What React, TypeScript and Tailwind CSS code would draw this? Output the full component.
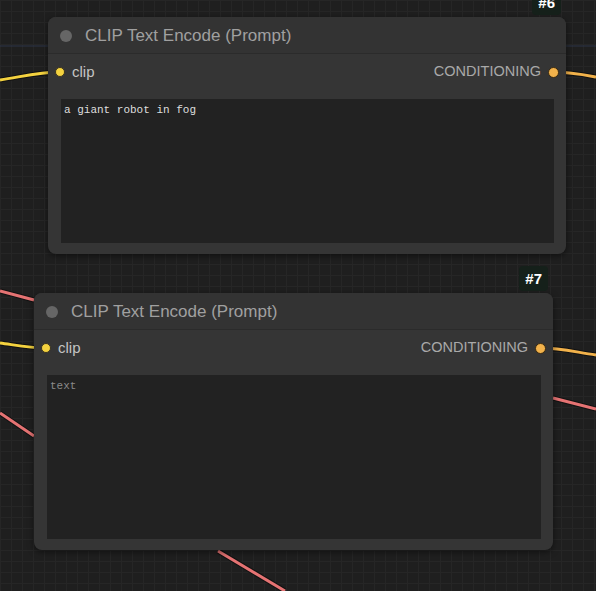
import React from "react";

type NodeProps = {
  id: string;
  left: number;
  top: number;
  width: number;
  areaHeight: number;
  text: string;
  placeholder?: boolean;
};

const ClipNode = ({ id, left, top, width, areaHeight, text, placeholder }: NodeProps) => {
  return (
    <div className="absolute" style={{ left, top, width }}>
      <div className="absolute right-[5px] -top-[27px] h-[25px] px-[6px] rounded-[4px] bg-[#15201a] text-white font-bold text-[15px] leading-[25px]">
        {id}
      </div>
      <div className="rounded-[8px] bg-[#353535] shadow-[0_2px_6px_rgba(0,0,0,0.5)]">
        <div className="flex items-center h-[37px] pl-[12px] pt-[2px] border-b border-[#2b2b2b] bg-[#333333] rounded-t-[8px]">
          <span className="w-[12px] h-[12px] rounded-full bg-[#666666]" />
          <span className="ml-[13px] text-[17px] text-[#a0a0a0]">CLIP Text Encode (Prompt)</span>
        </div>
        <div className="flex items-center justify-between h-[36px] px-[7px]">
          <div className="flex items-center gap-[7px]">
            <span className="w-[10px] h-[10px] rounded-full bg-[#f4d23f] border border-[#3a3320]" />
            <span className="text-[15px] text-[#c4c4c4]">clip</span>
          </div>
          <div className="flex items-center gap-[7px]">
            <span className="text-[14.5px] text-[#a9a9a9]">CONDITIONING</span>
            <span className="w-[11px] h-[11px] rounded-full bg-[#f2b24b] border border-[#3a2a10]" />
          </div>
        </div>
        <div className="pl-[13px] pr-[12px] pt-[9px] pb-[11px]">
          <div
            className={
              "bg-[#222222] px-[3px] py-[4px] text-[11px] leading-[14px] " +
              (placeholder ? "text-[#8a8a8a]" : "text-[#dedede]")
            }
            style={{ height: areaHeight, fontFamily: '"Liberation Mono", monospace' }}
          >
            {text}
          </div>
        </div>
      </div>
    </div>
  );
};

const Wire = ({ d, color }: { d: string; color: string }) => (
  <g>
    <path d={d} stroke="#111111" strokeWidth={5} fill="none" />
    <path d={d} stroke={color} strokeWidth={3} fill="none" />
  </g>
);

export default function App() {
  return (
    <div
      className="relative w-[596px] h-[591px] overflow-hidden bg-[#1f1f1f] bg-[linear-gradient(#262626_1px,transparent_1px),linear-gradient(90deg,#262626_1px,transparent_1px)] bg-[size:11px_11px]"
      style={{ fontFamily: '"Liberation Sans", Arial, sans-serif' }}
    >
      <svg className="absolute inset-0" width={596} height={591}>
        <line x1={0} y1={46} x2={596} y2={46} stroke="#2c3548" strokeWidth={1} />
        <Wire d="M0 80 C 25 76, 40 72, 60 72" color="#f4d23f" />
        <Wire d="M553 72 C 570 72, 580 74, 596 77" color="#f2b24b" />
        <Wire d="M0 291 L 34 300" color="#e57373" />
        <Wire d="M0 343 C 15 345, 30 348, 45 348" color="#f4d23f" />
        <Wire d="M0 413 L 34 436" color="#e57373" />
        <Wire d="M541 348 C 560 348, 575 352, 596 355" color="#f2b24b" />
        <Wire d="M553 398 L 596 409" color="#e57373" />
        <Wire d="M218 551 L 285 591" color="#e57373" />
      </svg>
      <ClipNode id="#6" left={48} top={17} width={518} areaHeight={144} text="a giant robot in fog" />
      <ClipNode id="#7" left={34} top={293} width={519} areaHeight={164} text="text" placeholder />
    </div>
  );
}
